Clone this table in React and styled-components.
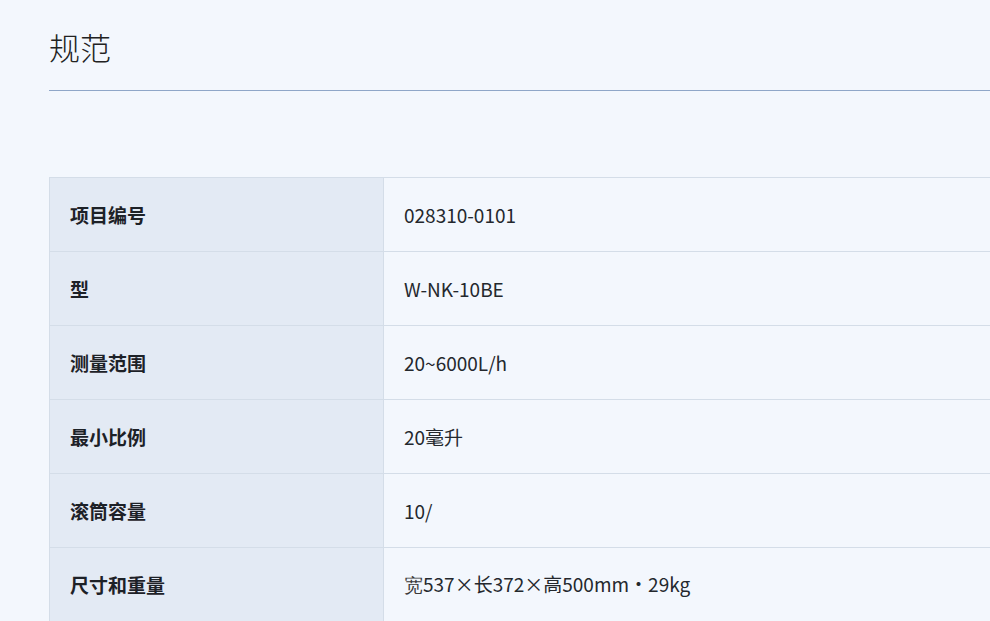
import React from "react";
import styled, { createGlobalStyle } from "styled-components";

const GlobalStyle = createGlobalStyle`
  html, body {
    margin: 0;
    padding: 0;
    background: #f3f7fd;
    overflow: hidden;
  }
  body {
    font-family: "Noto Sans CJK SC", "Noto Sans", sans-serif;
    color: #1f2328;
  }
`;

const Page = styled.div`
  padding: 0 0 0 49px;
  width: 1000px;
`;

const Title = styled.h2`
  margin: 0;
  padding: 24px 0 20px;
  font-size: 31px;
  font-weight: 300;
  line-height: 46px;
  color: #222;
  border-bottom: 1px solid #8fa6c8;
`;

const SpecTable = styled.table`
  margin-top: 86px;
  width: 100%;
  border-collapse: collapse;
  font-size: 19px;
`;

const Row = styled.tr`
  height: 74px;
`;

const Label = styled.th`
  width: 293px;
  padding: 0 20px;
  text-align: left;
  font-weight: 700;
  background: #e3eaf4;
  border: 1px solid #d4dde8;
  color: #1d2127;
`;

const Value = styled.td`
  padding: 0 20px;
  border: 1px solid #d4dde8;
  color: #24282d;
`;

const Odd = styled.span`
  font-family: "Liberation Serif", serif;
  color: #3a3a3a;
`;

const specs = [
  ["项目编号", "028310-0101"],
  ["型", "W-NK-10BE"],
  ["测量范围", "20~6000L/h"],
  ["最小比例", "20毫升"],
  ["滚筒容量", "10/"],
  ["尺寸和重量", <><Odd>宽</Odd>537×长372×高500mm・29kg</>],
];

export default function App() {
  return (
    <Page>
      <GlobalStyle />
      <Title>规范</Title>
      <SpecTable>
        <tbody>
          {specs.map(([k, v]) => (
            <Row key={k}>
              <Label>{k}</Label>
              <Value>{v}</Value>
            </Row>
          ))}
        </tbody>
      </SpecTable>
    </Page>
  );
}
